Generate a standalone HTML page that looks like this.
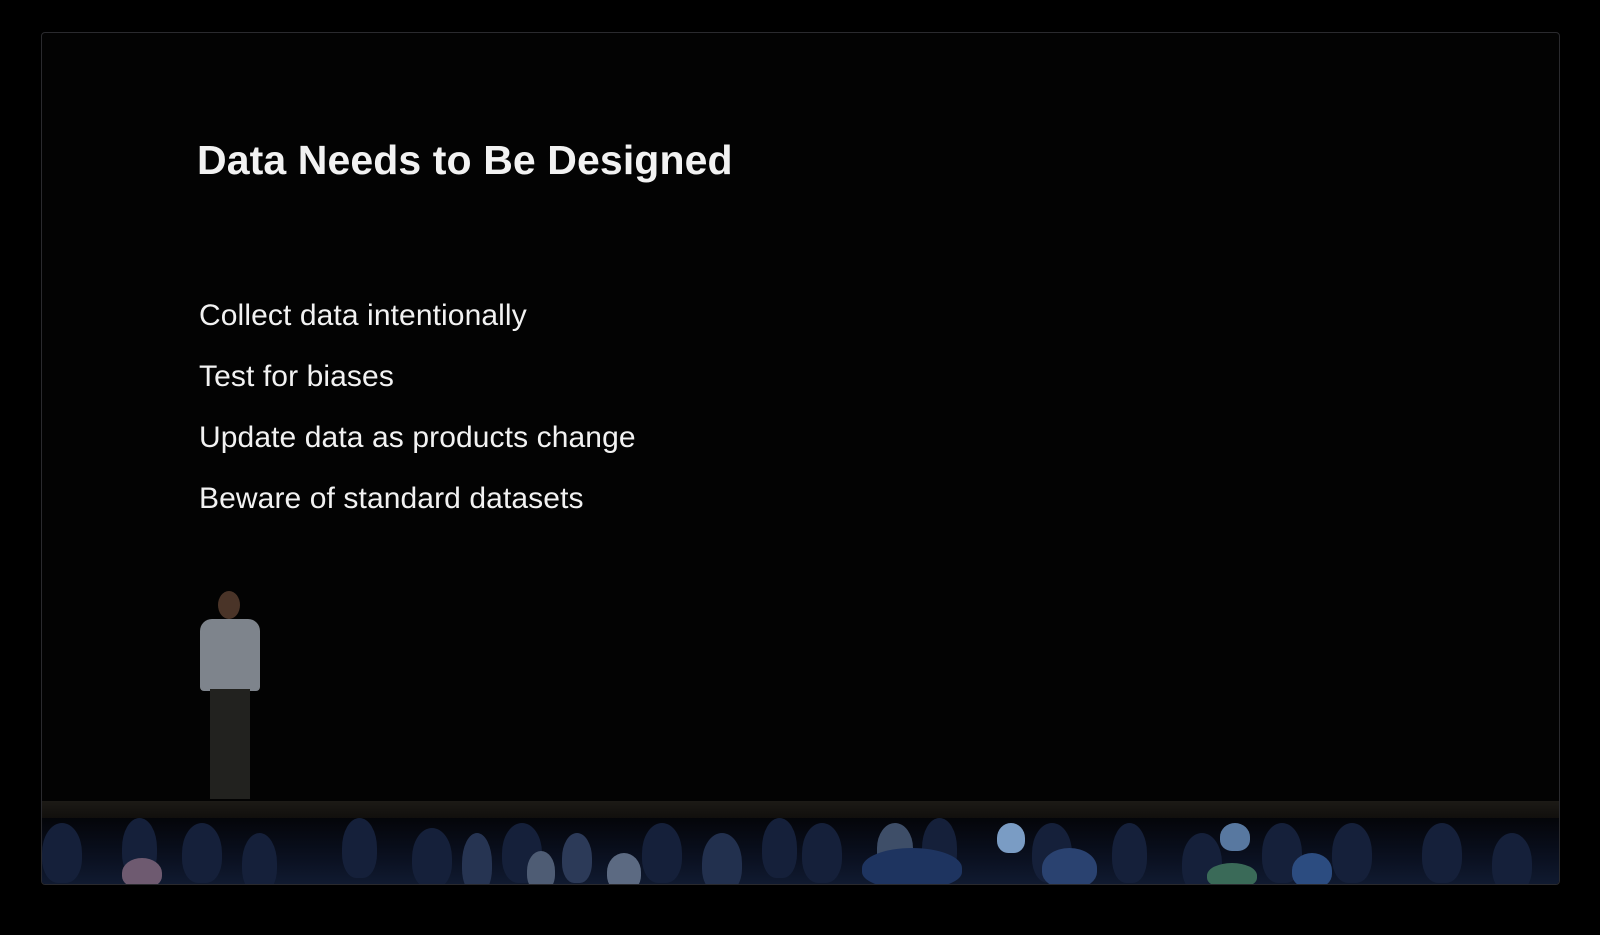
<!DOCTYPE html>
<html><head><style>
html,body{margin:0;background:#000;width:1600px;height:935px;overflow:hidden}
#f{position:absolute;left:41px;top:32px;width:1517px;height:851px;border:1px solid #2a2a2e;border-radius:4px;background:#030303;overflow:hidden;font-family:"Liberation Sans",sans-serif;color:#f2f2f2}
h1{position:absolute;left:155px;top:104px;margin:0;font-size:41px;font-weight:bold;letter-spacing:0.1px}
.b{position:absolute;left:157px;font-size:30px;letter-spacing:0.1px}
#floor{position:absolute;left:0;right:0;top:768px;height:22px;background:linear-gradient(#1c1a16,#0e0c0a)}
#aud{position:absolute;left:0;right:0;top:785px;bottom:0;background:linear-gradient(#040509,#0a1020 60%,#101a30)}
.h{position:absolute;border-radius:50% 50% 40% 40%;background:#15203a}
</style></head><body>
<div id="f">
<h1>Data Needs to Be Designed</h1>
<div class="b" style="top:266px">Collect data intentionally</div>
<div class="b" style="top:327px">Test for biases</div>
<div class="b" style="top:388px">Update data as products change</div>
<div class="b" style="top:449px">Beware of standard datasets</div>
<div id="floor"></div>
<div style="position:absolute;left:150px;top:558px;width:80px;height:230px">
<div style="position:absolute;left:26px;top:0;width:22px;height:28px;border-radius:50%;background:#4a3428"></div>
<div style="position:absolute;left:8px;top:28px;width:60px;height:72px;border-radius:12px 12px 4px 4px;background:#7e848c"></div>
<div style="position:absolute;left:18px;top:98px;width:40px;height:110px;background:#22221f"></div>
</div>
<div id="aud"></div>
<div class="h" style="left:0;top:790px;width:40px;height:60px"></div>
<div class="h" style="left:80px;top:785px;width:35px;height:60px"></div>
<div class="h" style="left:140px;top:790px;width:40px;height:60px"></div>
<div class="h" style="left:200px;top:800px;width:35px;height:60px"></div>
<div class="h" style="left:300px;top:785px;width:35px;height:60px"></div>
<div class="h" style="left:370px;top:795px;width:40px;height:60px"></div>
<div class="h" style="left:420px;top:800px;width:30px;height:60px;background:#263452"></div>
<div class="h" style="left:460px;top:790px;width:40px;height:60px"></div>
<div class="h" style="left:520px;top:800px;width:30px;height:50px;background:#2c3a58"></div>
<div class="h" style="left:600px;top:790px;width:40px;height:60px"></div>
<div class="h" style="left:660px;top:800px;width:40px;height:60px;background:#22304e"></div>
<div class="h" style="left:720px;top:785px;width:35px;height:60px"></div>
<div class="h" style="left:760px;top:790px;width:40px;height:60px"></div>
<div class="h" style="left:880px;top:785px;width:35px;height:60px"></div>
<div class="h" style="left:990px;top:790px;width:40px;height:60px"></div>
<div class="h" style="left:1070px;top:790px;width:35px;height:60px"></div>
<div class="h" style="left:1140px;top:800px;width:40px;height:60px"></div>
<div class="h" style="left:1220px;top:790px;width:40px;height:60px"></div>
<div class="h" style="left:1290px;top:790px;width:40px;height:60px"></div>
<div class="h" style="left:1380px;top:790px;width:40px;height:60px"></div>
<div class="h" style="left:1450px;top:800px;width:40px;height:60px"></div>
<div class="h" style="left:485px;top:818px;width:28px;height:40px;background:#4e5c74"></div>
<div class="h" style="left:565px;top:820px;width:34px;height:38px;background:#5c6a82"></div>
<div class="h" style="left:835px;top:790px;width:36px;height:50px;background:#3e4e68"></div>
<div class="h" style="left:955px;top:790px;width:28px;height:30px;background:#7a9cc4"></div>
<div class="h" style="left:1000px;top:815px;width:55px;height:40px;background:#2a4270"></div>
<div class="h" style="left:1178px;top:790px;width:30px;height:28px;background:#5878a0"></div>
<div class="h" style="left:80px;top:825px;width:40px;height:30px;background:#6e5a70"></div>
<div class="h" style="left:820px;top:815px;width:100px;height:40px;background:#1e3460"></div>
<div class="h" style="left:1165px;top:830px;width:50px;height:25px;background:#3a6a58"></div>
<div class="h" style="left:1250px;top:820px;width:40px;height:35px;background:#2c4c80"></div>
</div>
</body></html>
